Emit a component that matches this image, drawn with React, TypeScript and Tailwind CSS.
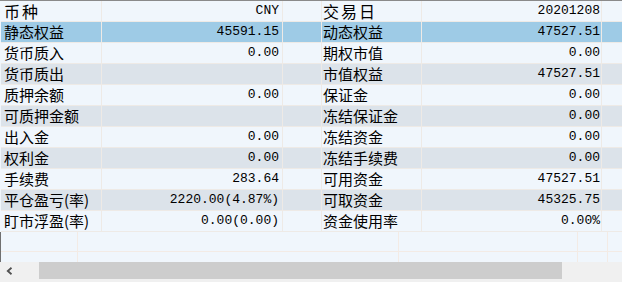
import React from "react";

type Row = { l1: string; v1: string; l2: string; v2: string; tone: "light" | "gray" | "hi" };

const rows: Row[] = [
  { l1: "币种", v1: "CNY", l2: "交易日", v2: "20201208", tone: "light" },
  { l1: "静态权益", v1: "45591.15", l2: "动态权益", v2: "47527.51", tone: "hi" },
  { l1: "货币质入", v1: "0.00", l2: "期权市值", v2: "0.00", tone: "light" },
  { l1: "货币质出", v1: "", l2: "市值权益", v2: "47527.51", tone: "gray" },
  { l1: "质押余额", v1: "0.00", l2: "保证金", v2: "0.00", tone: "light" },
  { l1: "可质押金额", v1: "", l2: "冻结保证金", v2: "0.00", tone: "gray" },
  { l1: "出入金", v1: "0.00", l2: "冻结资金", v2: "0.00", tone: "light" },
  { l1: "权利金", v1: "0.00", l2: "冻结手续费", v2: "0.00", tone: "gray" },
  { l1: "手续费", v1: "283.64", l2: "可用资金", v2: "47527.51", tone: "light" },
  { l1: "平仓盈亏(率)", v1: "2220.00(4.87%)", l2: "可取资金", v2: "45325.75", tone: "gray" },
  { l1: "盯市浮盈(率)", v1: "0.00(0.00)", l2: "资金使用率", v2: "0.00%", tone: "light" },
];

const toneClass = {
  light: "bg-[#f0f6fc]",
  gray: "bg-[#dce3ea]",
  hi: "bg-[#9ecbe6]",
};

const cjk = "font-['SimSun','Noto_Sans_CJK_SC',sans-serif] text-[15px] leading-[20px] text-black";
const cjkHead = "font-['SimSun','Noto_Sans_CJK_SC',sans-serif] text-[16px] leading-[20px] tracking-[2px] text-black";
const mono = "font-['Liberation_Mono',monospace] text-[13px] leading-[20px] text-black";

export default function App() {
  return (
    <div className="w-[622px] h-[282px] bg-[#f0f6fc] border-t border-[#8a8a8a] flex flex-col overflow-hidden">
      <div className="flex flex-col pl-px">
        {rows.map((r, i) => {
          const lab = i === 0 ? cjkHead : cjk;
          return (
            <div key={i} className={`flex h-[21px] border-b border-[#eeeae6] ${toneClass[r.tone]}`}>
              <div className={`w-[101px] shrink-0 border-r border-[#eeeae6] pl-[3px] whitespace-nowrap ${lab}`}>{r.l1}</div>
              <div className={`w-[181px] shrink-0 border-r border-[#eeeae6] pr-[3px] text-right whitespace-nowrap ${mono}`}>{r.v1}</div>
              <div className="w-[39px] shrink-0 border-r border-[#eeeae6]" />
              <div className={`w-[100px] shrink-0 border-r border-[#eeeae6] pl-px whitespace-nowrap ${lab}`}>{r.l2}</div>
              <div className={`w-[180px] shrink-0 border-r border-[#eeeae6] pr-[1px] text-right whitespace-nowrap ${mono}`}>{r.v2}</div>
              <div className="flex-1" />
            </div>
          );
        })}
      </div>
      <div className="flex flex-col h-[30px] border-l border-[#707070]">
        {[0, 1].map((k) => (
          <div key={k} className={`flex ${k === 0 ? "h-[20px] border-b border-[#f3ebe5]" : "h-[10px]"}`}>
            <div className="w-[77px] shrink-0 border-r border-[#f3ebe5]" />
            <div className="w-[321px] shrink-0 border-r border-[#f3ebe5]" />
            <div className="w-[179px] shrink-0 border-r border-[#f3ebe5]" />
            <div className="w-[30px] shrink-0 border-r border-[#f3ebe5]" />
            <div className="flex-1" />
          </div>
        ))}
      </div>
      <div className="flex h-[17px] bg-[#f0f0f0]">
        <div className="w-[39px] shrink-0 flex items-center pl-[6px]">
          <svg width="7" height="8" viewBox="0 0 7 8">
            <path d="M5.5 0.8 L1.8 4 L5.5 7.2" stroke="#505050" strokeWidth="1.8" fill="none" />
          </svg>
        </div>
        <div className="w-[523px] shrink-0 bg-[#cdcdcd]" />
        <div className="flex-1" />
      </div>
      <div className="flex-1 bg-[#f0f0f0]" />
    </div>
  );
}
